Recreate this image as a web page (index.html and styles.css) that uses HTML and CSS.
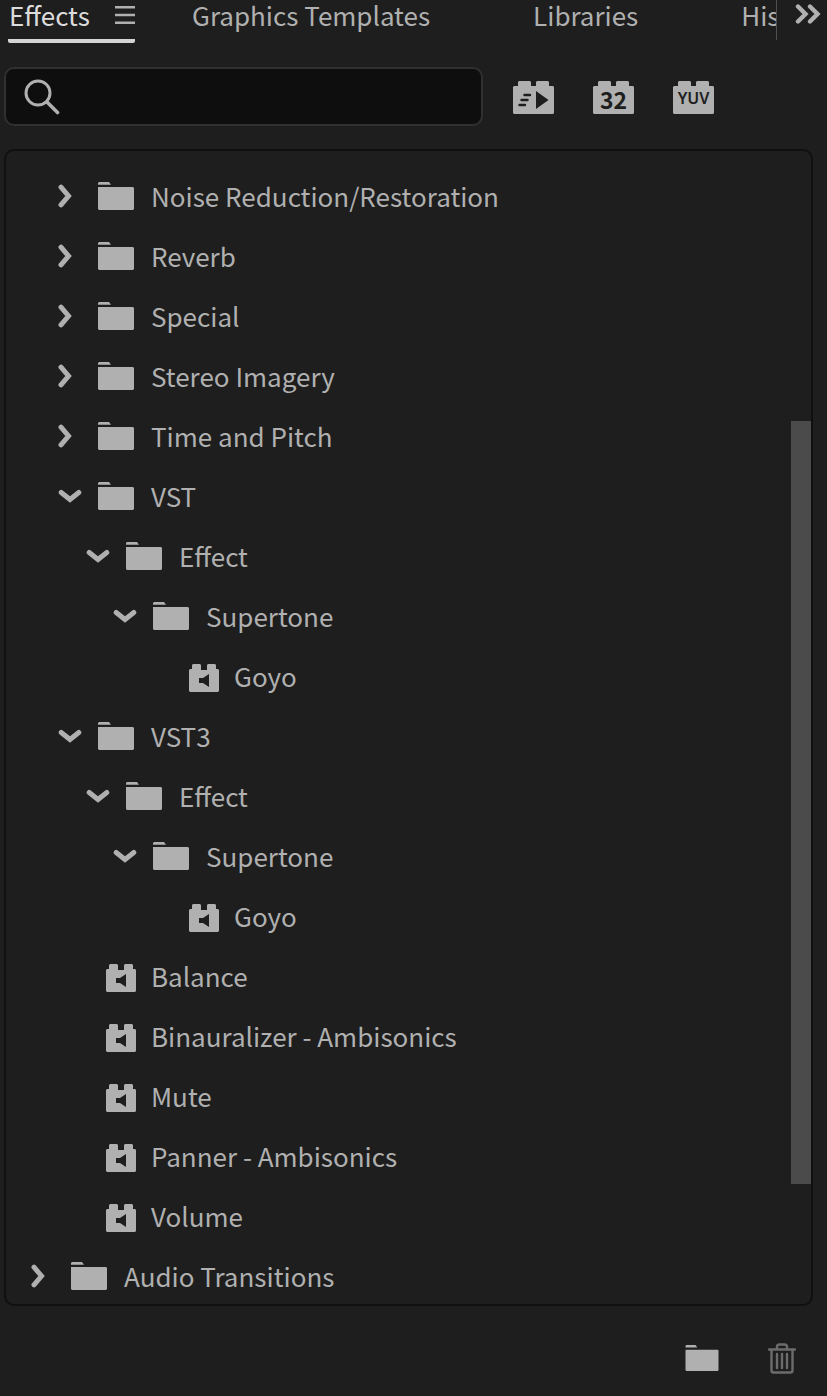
FILE: index.html
```html
<!DOCTYPE html>
<html lang="en">
<head>
<meta charset="utf-8">
<meta name="viewport" content="width=device-width, initial-scale=1">
<title>Effects</title>
<link rel="stylesheet" href="styles.css">
</head>
<body>
<svg class="sprite" aria-hidden="true">
  <symbol id="folder" viewBox="0 0 36 28"><path d="M1 0h10l2 2.700H0V1zM0 5h35l1 1v21l-1 1H1l-1-1z"/></symbol>
  <symbol id="right" viewBox="0 0 14 24"><path d="M3 3.2 10.500 12l-7.500 8.8" fill="none" stroke="currentColor" stroke-width="5" stroke-linecap="round"/></symbol>
  <symbol id="down" viewBox="0 0 24 14"><path d="M3.2 3.500 12 10.500l8.800-7" fill="none" stroke="currentColor" stroke-width="5" stroke-linecap="round"/></symbol>
  <symbol id="audio" viewBox="0 0 30 28"><path fill-rule="evenodd" d="M3 1l1-1h7l1 1v5h6V1l1-1h7l1 1v4h2l1 1v21l-1 1H1l-1-1V6l1-1h2zM20 10l-6 4h-4v5h4l6 4z"/></symbol>
  <symbol id="brick" viewBox="0 0 41 33"><path d="M5 1l1-1h11l1 1v4h5V1l1-1h11l1 1v4h4l1 1v26l-1 1H1l-1-1V6l1-1h4z"/></symbol>
</svg>
<main class="panel">
  <header class="tabbar">
    <nav class="tabs" aria-label="Panels">
      <div class="tab tab-active">
        <button class="tab-name" type="button">Effects</button>
        <button class="tab-menu" type="button" aria-label="Panel menu"><svg width="20" height="18" viewBox="0 0 20 18"><path d="M0 1.3h20M0 9h20M0 16.7h20" stroke="currentColor" stroke-width="2.4"/></svg></button>
      </div>
      <div class="tab"><button class="tab-name" type="button">Graphics Templates</button></div>
      <div class="tab"><button class="tab-name" type="button">Libraries</button></div>
      <div class="tab"><button class="tab-name" type="button">History</button></div>
    </nav>
    <button class="more" type="button" aria-label="More panels"><svg width="26" height="20" viewBox="0 0 26 20"><path class="line" d="M3 2.500l7.500 7.500L3 17.500M15 2.500l7.500 7.500-7.500 7.500" stroke-width="4.400"/></svg></button>
  </header>

  <div class="toolbar">
    <label class="search">
      <svg width="36" height="36" viewBox="0 0 36 36" aria-hidden="true"><circle class="line" cx="14" cy="14" r="12" stroke-width="3"/><path class="line" d="M23 23l10.500 10.500" stroke-width="3.600"/></svg>
      <input type="search" aria-label="Search effects">
    </label>
    <button class="filter" type="button" aria-label="Accelerated effects"><svg width="41" height="33" viewBox="0 0 41 33"><use href="#brick"/><path class="cut" d="M23 10l12.500 9L23 28z"/><path class="cut-line" d="M11.500 14h5.500M8.500 19h6M6.500 24h5.500"/></svg></button>
    <button class="filter" type="button" aria-label="32-bit color effects"><svg width="41" height="33" viewBox="0 0 41 33"><use href="#brick"/><text class="cut bits" x="20.500" y="28" text-anchor="middle">32</text></svg></button>
    <button class="filter" type="button" aria-label="YUV effects"><svg width="41" height="33" viewBox="0 0 41 33"><use href="#brick"/><text class="cut yuv" x="20.500" y="23" text-anchor="middle">YUV</text></svg></button>
  </div>

  <section class="browser" aria-label="Effects list">
    <ul class="tree">
      <li><button class="row level-1" type="button"><span class="twist"><svg class="right"><use href="#right"/></svg></span><svg class="folder"><use href="#folder"/></svg><span>Noise Reduction/Restoration</span></button></li>
      <li><button class="row level-1" type="button"><span class="twist"><svg class="right"><use href="#right"/></svg></span><svg class="folder"><use href="#folder"/></svg><span>Reverb</span></button></li>
      <li><button class="row level-1" type="button"><span class="twist"><svg class="right"><use href="#right"/></svg></span><svg class="folder"><use href="#folder"/></svg><span>Special</span></button></li>
      <li><button class="row level-1" type="button"><span class="twist"><svg class="right"><use href="#right"/></svg></span><svg class="folder"><use href="#folder"/></svg><span>Stereo Imagery</span></button></li>
      <li><button class="row level-1" type="button"><span class="twist"><svg class="right"><use href="#right"/></svg></span><svg class="folder"><use href="#folder"/></svg><span>Time and Pitch</span></button></li>
      <li><button class="row level-1" type="button" aria-expanded="true"><span class="twist"><svg class="down"><use href="#down"/></svg></span><svg class="folder"><use href="#folder"/></svg><span>VST</span></button></li>
      <li><button class="row level-2" type="button" aria-expanded="true"><span class="twist"><svg class="down"><use href="#down"/></svg></span><svg class="folder"><use href="#folder"/></svg><span>Effect</span></button></li>
      <li><button class="row level-3" type="button" aria-expanded="true"><span class="twist"><svg class="down"><use href="#down"/></svg></span><svg class="folder"><use href="#folder"/></svg><span>Supertone</span></button></li>
      <li><button class="row level-4" type="button"><span class="twist"></span><svg class="audio"><use href="#audio"/></svg><span>Goyo</span></button></li>
      <li><button class="row level-1" type="button" aria-expanded="true"><span class="twist"><svg class="down"><use href="#down"/></svg></span><svg class="folder"><use href="#folder"/></svg><span>VST3</span></button></li>
      <li><button class="row level-2" type="button" aria-expanded="true"><span class="twist"><svg class="down"><use href="#down"/></svg></span><svg class="folder"><use href="#folder"/></svg><span>Effect</span></button></li>
      <li><button class="row level-3" type="button" aria-expanded="true"><span class="twist"><svg class="down"><use href="#down"/></svg></span><svg class="folder"><use href="#folder"/></svg><span>Supertone</span></button></li>
      <li><button class="row level-4" type="button"><span class="twist"></span><svg class="audio"><use href="#audio"/></svg><span>Goyo</span></button></li>
      <li><button class="row level-1" type="button"><span class="twist"></span><svg class="audio"><use href="#audio"/></svg><span>Balance</span></button></li>
      <li><button class="row level-1" type="button"><span class="twist"></span><svg class="audio"><use href="#audio"/></svg><span>Binauralizer - Ambisonics</span></button></li>
      <li><button class="row level-1" type="button"><span class="twist"></span><svg class="audio"><use href="#audio"/></svg><span>Mute</span></button></li>
      <li><button class="row level-1" type="button"><span class="twist"></span><svg class="audio"><use href="#audio"/></svg><span>Panner - Ambisonics</span></button></li>
      <li><button class="row level-1" type="button"><span class="twist"></span><svg class="audio"><use href="#audio"/></svg><span>Volume</span></button></li>
      <li><button class="row" type="button"><span class="twist"><svg class="right"><use href="#right"/></svg></span><svg class="folder"><use href="#folder"/></svg><span>Audio Transitions</span></button></li>
    </ul>
    <div class="thumb"></div>
  </section>

  <footer class="actions">
    <button type="button" aria-label="New custom bin"><svg width="34" height="26" viewBox="0 0 36 28"><use href="#folder"/></svg></button>
    <button class="trash" type="button" aria-label="Delete"><svg width="28" height="31" viewBox="0 0 28 31"><path class="line" d="M1 6.500h26M9 6V4q0-2.500 2.500-2.500h5Q19 1.500 19 4v2M3.500 7v20.500q0 2 2 2h17q2 0 2-2V7M9 11v14M14 11v14M19 11v14" stroke-width="2.400"/></svg></button>
  </footer>
</main>
</body>
</html>
```
FILE: styles.css
```css
* { box-sizing: border-box; }

body {
  margin: 0;
  background: #1e1e1e;
  color: #b0b0b0;
  font: 26px/32px "Noto Sans CJK SC", "Noto Sans", sans-serif;
}

button {
  padding: 0;
  border: 0;
  background: none;
  color: inherit;
  font: inherit;
  text-align: left;
  white-space: nowrap;
}

svg { display: block; flex: none; fill: currentColor; }
.line { fill: none; stroke: currentColor; stroke-linecap: round; }
.sprite { position: absolute; width: 0; height: 0; }

.panel {
  display: flex;
  flex-direction: column;
  height: 100vh;
}

/* Tabs */
.tabbar { display: flex; flex: none; height: 67px; }
.tabs {
  display: flex;
  flex: 1;
  gap: 57px;
  min-width: 0;
  height: 43px;
  padding-left: 8px;
  overflow-x: clip;
}
.tab { display: flex; flex: none; align-items: flex-start; padding-right: 46px; }
.tab-name { line-height: 30px; }
.tab-active {
  justify-content: space-between;
  width: 127px;
  padding: 0 0 0 1px;
  border-bottom: 4px solid #d4d4d4;
  border-radius: 2px;
  color: #dcdcdc;
}
.tab-menu { padding-top: 6px; color: #b0b0b0; }
.more {
  display: flex;
  width: 51px;
  height: 40px;
  padding: 4px 0 0 18px;
  border-left: 1px solid #505050;
}

/* Search and filters */
.toolbar { display: flex; flex: none; align-items: center; gap: 39px; padding: 0 113px 0 4px; }
.search {
  display: flex;
  flex: 1;
  align-items: center;
  gap: 12px;
  height: 59px;
  min-width: 0;
  margin-right: -9px;
  padding: 0 18px;
  border: 2px solid #303030;
  border-radius: 10px;
  background: #0e0e0e;
}
.search input {
  flex: 1;
  min-width: 0;
  border: 0;
  outline: 0;
  background: none;
  color: inherit;
  font: inherit;
}
.filter { padding-top: 2px; }
.cut { fill: #1e1e1e; }
.cut-line { stroke: #1e1e1e; stroke-width: 2.4; stroke-linecap: round; }
.bits { font: 700 23px "Noto Sans CJK SC", sans-serif; }
.yuv { font: 600 16px "Noto Sans", sans-serif; }

/* Effects list */
.browser {
  position: relative;
  flex: 1;
  min-height: 0;
  margin: 23px 14px 0 4px;
  border: 2px solid #101010;
  border-radius: 10px;
  overflow: hidden;
}
.tree { margin: 0; padding: 15px 0 0; list-style: none; }
.row { display: flex; align-items: center; width: 100%; height: 60px; padding-left: 25px; }
.level-1 { padding-left: 52px; }
.level-2 { padding-left: 80px; }
.level-3 { padding-left: 107px; }
.level-4 { padding-left: 135px; }
.twist { flex: none; width: 40px; }
.right { width: 14px; height: 24px; }
.down { width: 24px; height: 14px; }
.folder { width: 36px; height: 28px; margin-right: 17px; }
.audio { width: 30px; height: 28px; margin: 4px 15px 0 8px; }
.thumb {
  position: absolute;
  top: 23.4%;
  right: 0;
  width: 20px;
  height: 66.2%;
  background: #4b4b4b;
}

/* Footer */
.actions {
  display: flex;
  flex: none;
  justify-content: flex-end;
  align-items: center;
  gap: 49px;
  height: 90px;
  padding: 14px 31px 0 0;
}
.trash { color: #6c6c6c; }
```
